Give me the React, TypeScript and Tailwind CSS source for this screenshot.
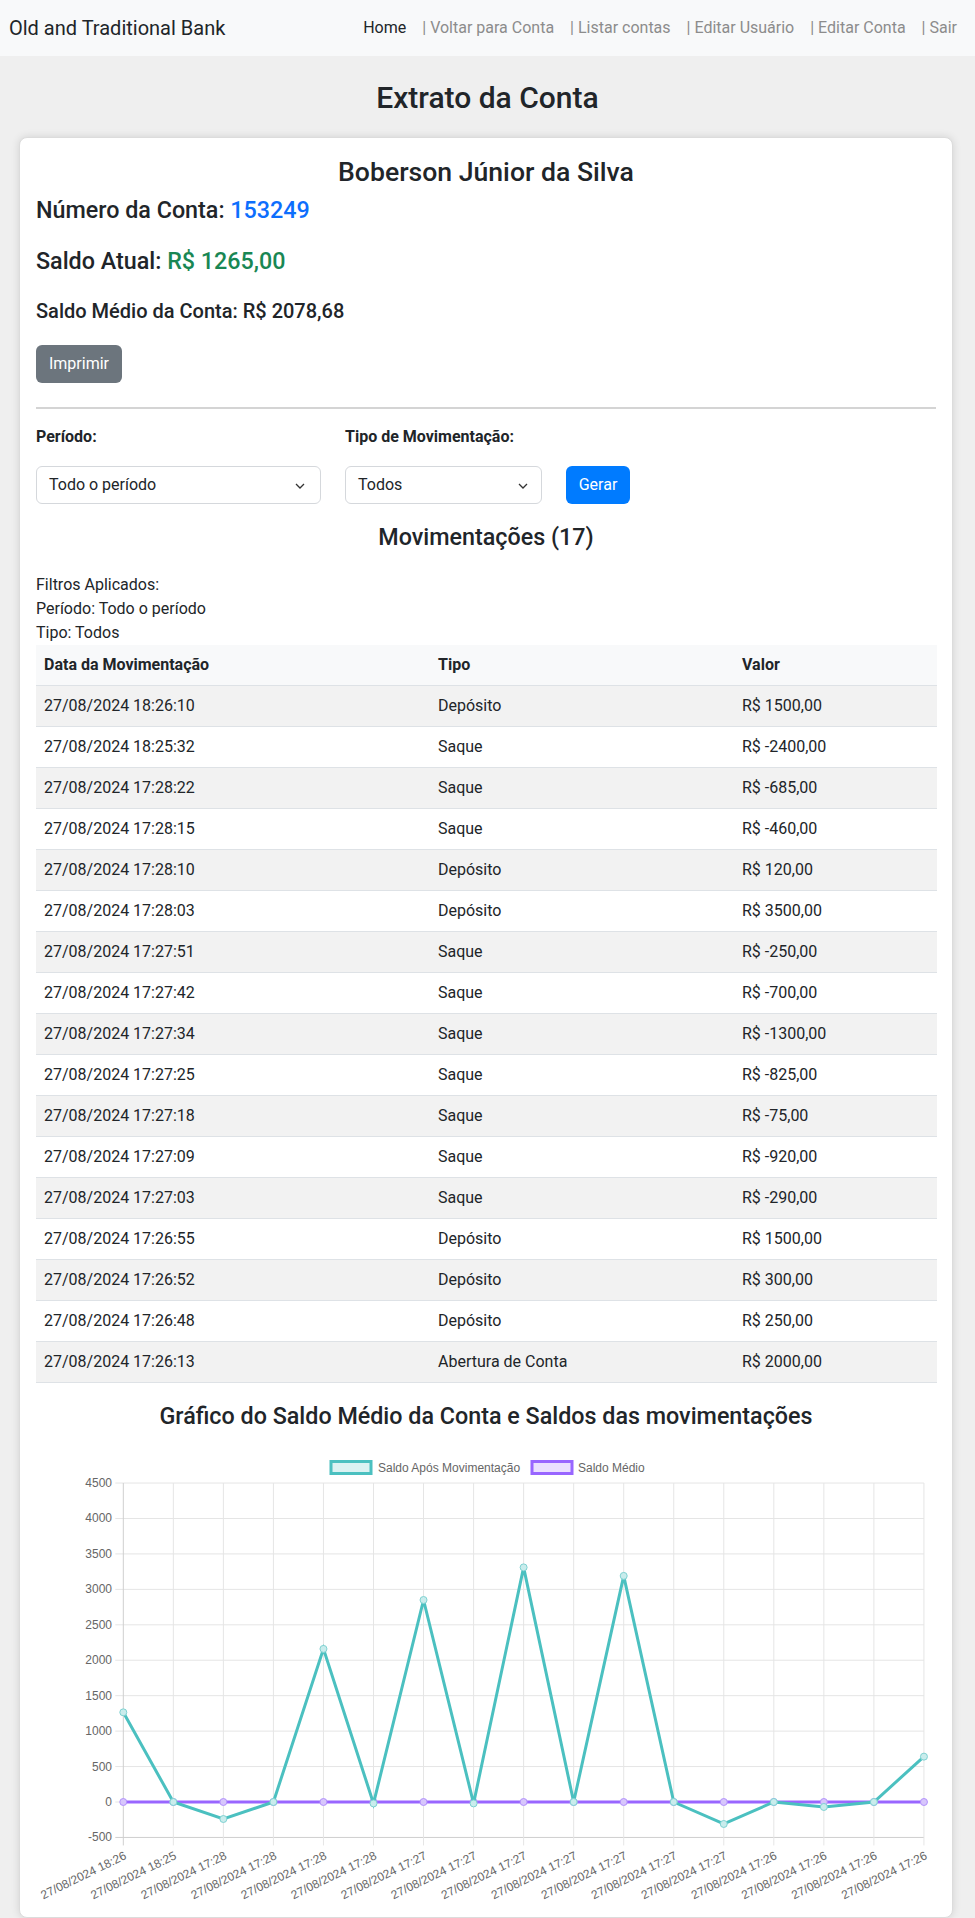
import { type FC } from 'react';

const links = ['| Voltar para Conta', '| Listar contas', '| Editar Usuário', '| Editar Conta', '| Sair'];

const rows: [string, string, string][] = [
  ['27/08/2024 18:26:10', 'Depósito', 'R$ 1500,00'],
  ['27/08/2024 18:25:32', 'Saque', 'R$ -2400,00'],
  ['27/08/2024 17:28:22', 'Saque', 'R$ -685,00'],
  ['27/08/2024 17:28:15', 'Saque', 'R$ -460,00'],
  ['27/08/2024 17:28:10', 'Depósito', 'R$ 120,00'],
  ['27/08/2024 17:28:03', 'Depósito', 'R$ 3500,00'],
  ['27/08/2024 17:27:51', 'Saque', 'R$ -250,00'],
  ['27/08/2024 17:27:42', 'Saque', 'R$ -700,00'],
  ['27/08/2024 17:27:34', 'Saque', 'R$ -1300,00'],
  ['27/08/2024 17:27:25', 'Saque', 'R$ -825,00'],
  ['27/08/2024 17:27:18', 'Saque', 'R$ -75,00'],
  ['27/08/2024 17:27:09', 'Saque', 'R$ -920,00'],
  ['27/08/2024 17:27:03', 'Saque', 'R$ -290,00'],
  ['27/08/2024 17:26:55', 'Depósito', 'R$ 1500,00'],
  ['27/08/2024 17:26:52', 'Depósito', 'R$ 300,00'],
  ['27/08/2024 17:26:48', 'Depósito', 'R$ 250,00'],
  ['27/08/2024 17:26:13', 'Abertura de Conta', 'R$ 2000,00'],
];

// chart data, same order as the table
const labels = rows.map((r) => r[0].slice(0, 16));
const saldos = [1265, 0, -240, 0, 2160, -20, 2850, -20, 3310, 0, 3190, 0, -310, 0, -70, 0, 640];
const medio = saldos.map(() => 0);

const X0 = 87.3;
const DX = 50.04;
const xOf = (i: number) => X0 + i * DX;
const yOf = (v: number) => 356 - v * 0.07088;
const ticks = [4500, 4000, 3500, 3000, 2500, 2000, 1500, 1000, 500, 0, -500];

const Chevron: FC<{ className: string }> = ({ className }) => (
  <svg width="10" height="6" viewBox="0 0 10 6" className={className}>
    <path d="M1 1l4 4 4-4" fill="none" stroke="#333" strokeWidth="1.3" />
  </svg>
);

const Chart: FC = () => {
  const lastX = xOf(16);
  const pts = (data: number[]) => data.map((v, i) => `${xOf(i)},${yOf(v)}`).join(' ');
  return (
    <svg width="900" height="455" className="mt-4 block">
      {/* legend */}
      <rect x="295" y="15.5" width="40" height="12" fill="rgba(75,192,192,0.2)" stroke="#4bc0c0" strokeWidth="3" />
      <text x="342" y="26" fontSize="12" fill="#666" fontFamily="'Liberation Sans', Arial, sans-serif">
        Saldo Após Movimentação
      </text>
      <rect x="496" y="15.5" width="40" height="12" fill="rgba(153,102,255,0.2)" stroke="#9966ff" strokeWidth="3" />
      <text x="542" y="26" fontSize="12" fill="#666" fontFamily="'Liberation Sans', Arial, sans-serif">
        Saldo Médio
      </text>

      {/* grid */}
      {ticks.map((t) => (
        <g key={t}>
          <line x1={X0 - 8} x2={lastX} y1={yOf(t)} y2={yOf(t)} stroke={t === -500 ? '#cfcfcf' : '#e5e5e5'} />
          <text
            x="76"
            y={yOf(t) + 4}
            textAnchor="end"
            fontSize="12"
            fill="#666"
            fontFamily="'Liberation Sans', Arial, sans-serif"
          >
            {t}
          </text>
        </g>
      ))}
      {labels.map((l, i) => (
        <g key={i}>
          <line x1={xOf(i)} x2={xOf(i)} y1={yOf(4500)} y2={yOf(-500) + 8} stroke={i === 0 ? '#cfcfcf' : '#e5e5e5'} />
          <text
            transform={`translate(${xOf(i) + 4},${yOf(-500) + 21}) rotate(-26)`}
            textAnchor="end"
            fontSize="12"
            fill="#666"
            fontFamily="'Liberation Sans', Arial, sans-serif"
          >
            {l}
          </text>
        </g>
      ))}

      {/* saldo medio */}
      <polyline points={pts(medio)} fill="none" stroke="#9966ff" strokeWidth="3" strokeLinejoin="round" />
      {medio.map((v, i) => (
        <circle key={i} cx={xOf(i)} cy={yOf(v)} r="3.5" fill="#d7c6fb" stroke="#b392fc" strokeWidth="1" />
      ))}
      {/* saldo apos movimentacao */}
      <polyline points={pts(saldos)} fill="none" stroke="#4bc0c0" strokeWidth="3" strokeLinejoin="miter" />
      {saldos.map((v, i) => (
        <circle key={i} cx={xOf(i)} cy={yOf(v)} r="3.5" fill="#c9ecec" stroke="#7fd2d2" strokeWidth="1" />
      ))}
    </svg>
  );
};

const App: FC = () => {
  return (
    <div className="min-h-screen bg-[#efefef] font-['Roboto',sans-serif] text-[#212529]">
      <nav className="flex h-14 items-center bg-[#f8f9fa] pl-[9px] pr-[10px]">
        <span className="text-[20px] text-[#212529]">Old and Traditional Bank</span>
        <div className="ml-auto flex text-base">
          <span className="px-2 text-[#212529]">Home</span>
          {links.map((l) => (
            <span key={l} className="px-2 text-[#8c8c8c]">
              {l}
            </span>
          ))}
        </div>
      </nav>

      <h2 className="mt-6 mb-[21px] text-center text-[30px] leading-[36px] font-medium">Extrato da Conta</h2>

      <div className="ml-[19px] w-[934px] rounded-lg border border-[#dcdcdc] bg-white px-4 pt-[18px] pb-4 shadow-[0_0_8px_rgba(0,0,0,0.12)]">
        <h3 className="text-center text-[26.6px] leading-8 font-medium">Boberson Júnior da Silva</h3>
        <h4 className="mt-2 text-[23.3px] leading-7 font-medium">
          Número da Conta: <span className="text-[#0d6efd]">153249</span>
        </h4>
        <h4 className="mt-[23px] text-[23.3px] leading-7 font-medium">
          Saldo Atual: <span className="text-[#198754]">R$ 1265,00</span>
        </h4>
        <h5 className="mt-6 text-[20px] leading-6 font-medium">Saldo Médio da Conta: R$ 2078,68</h5>
        <button className="mt-[22px] h-[38px] w-[86px] rounded-md bg-[#6c757d] text-base text-white">Imprimir</button>
        <hr className="mt-6 border-t-2 border-[#d4d4d4]" />

        <div className="mt-[16px] flex items-end gap-6">
          <div className="flex flex-col">
            <label className="text-base leading-6 font-bold">Período:</label>
            <div className="relative mt-[17px] flex h-[38px] w-[285px] items-center rounded-md border border-[#d5d8dc] px-3">
              Todo o período
              <Chevron className="absolute right-[15px] top-[16px]" />
            </div>
          </div>
          <div className="flex flex-col">
            <label className="text-base leading-6 font-bold">Tipo de Movimentação:</label>
            <div className="relative mt-[17px] flex h-[38px] w-[197px] items-center rounded-md border border-[#d5d8dc] px-3">
              Todos
              <Chevron className="absolute right-[13px] top-[16px]" />
            </div>
          </div>
          <button className="h-[38px] w-16 rounded-md bg-[#007bff] text-base text-white">Gerar</button>
        </div>

        <h4 className="mt-[19px] text-center text-[23.3px] leading-7 font-medium">Movimentações (17)</h4>

        <div className="mt-[22px] text-base leading-6">
          <p>Filtros Aplicados:</p>
          <p>Período: Todo o período</p>
          <p>Tipo: Todos</p>
        </div>

        <table className="w-[901px] border-collapse text-left text-base">
          <thead>
            <tr className="h-10 border-b border-[#dee2e6] bg-[#f8f9fa]">
              <th className="w-[394px] px-2 font-bold">Data da Movimentação</th>
              <th className="w-[304px] px-2 font-bold">Tipo</th>
              <th className="px-2 font-bold">Valor</th>
            </tr>
          </thead>
          <tbody>
            {rows.map((r, i) => (
              <tr key={i} className={`h-[41px] border-b border-[#dee2e6] ${i % 2 === 0 ? 'bg-[#f2f2f2]' : 'bg-white'}`}>
                <td className="px-2">{r[0]}</td>
                <td className="px-2">{r[1]}</td>
                <td className="px-2">{r[2]}</td>
              </tr>
            ))}
          </tbody>
        </table>

        <h4 className="mt-[19px] text-center text-[23.3px] leading-7 font-medium">
          Gráfico do Saldo Médio da Conta e Saldos das movimentações
        </h4>
        <Chart />
      </div>
    </div>
  );
};

export default App;
